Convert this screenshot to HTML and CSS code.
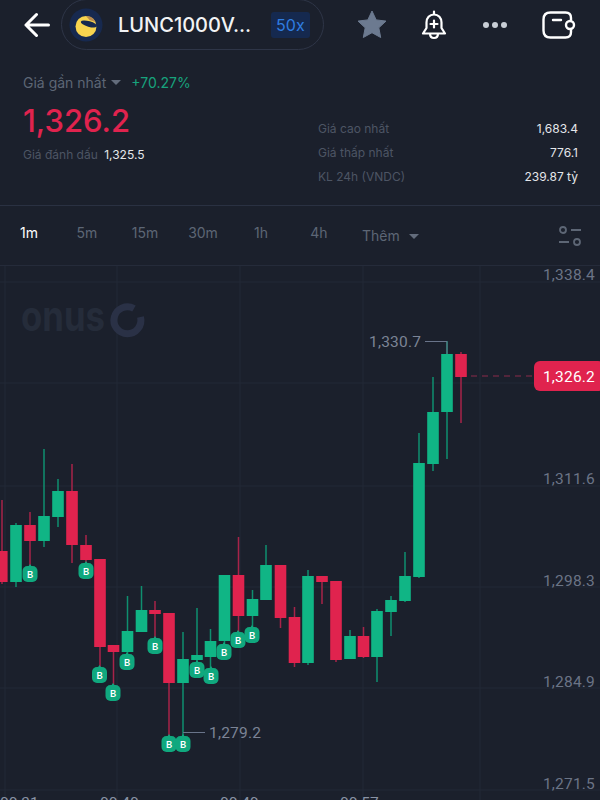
FILE: index.html
```html
<!DOCTYPE html>
<html lang="vi">
<head>
    <meta charset="utf-8" />
    <title>LUNC1000VNDC</title>
    <link rel="stylesheet" href="styles.css">
</head>
<body>
    <div class="page">
        <div class="topbar">
            <svg class="back" width="26" height="26" viewBox="0 0 26 26"><path d="M24.5 13H2M12.5 2.5 2 13l10.500 10.500" /></svg>
            <div class="pair">
                <svg class="coin" width="34" height="34" viewBox="0 0 34 34">
                    <circle cx="17" cy="17" r="16.500" fill="#17294f" />
                    <circle cx="17" cy="18.500" r="10.500" fill="#f8d44f" />
                    <path d="M17 8c4 0 8 2 9.500 6l-6-2z" fill="#b98a4e" />
                    <ellipse cx="20" cy="16" rx="8.500" ry="2.800" transform="rotate(16 20 16)" fill="#17294f" />
                </svg>
                <span class="pair_name">LUNC1000V...</span>
                <span class="leverage">50x</span>
            </div>
            <div class="actions">
                <svg class="star" width="30" height="30" viewBox="0 0 30 30"><path d="M15 1l4.200 8.900 9.800 1.200-7.200 6.700 1.900 9.700-8.700-4.800-8.700 4.800 1.900-9.700L1 11.100l9.800-1.200z" stroke="#6c7a90" stroke-width="1" stroke-linejoin="round" /></svg>
                <svg class="bell" width="28" height="30" viewBox="0 0 28 30">
                    <path d="M14 1.500v3M14 4.500c-4.500 0-7.500 3.500-7.500 8v5.500L3 23.500h22L21.500 18v-5.500c0-4.500-3-8-7.500-8zM10 23.500c0 3 1.800 4.500 4 4.500s4-1.500 4-4.500M14 10.500v7M10.500 14h7" />
                </svg>
                <svg class="dots" width="28" height="30" viewBox="0 0 28 30"><circle cx="5" cy="15" r="3" /><circle cx="14" cy="15" r="3" /><circle cx="23" cy="15" r="3" /></svg>
                <svg class="wallet" width="34" height="30" viewBox="0 0 34 30">
                    <path d="M29 10V8c0-3.500-2-5.500-5.500-5.500h-15C4 2.500 1.500 5 1.500 9.500v11c0 4.500 2.500 7 7 7h15c3.500 0 5.500-2 5.500-5.500v-2M11 10h8" />
                    <rect x="24" y="11" width="8" height="8" rx="4" />
                </svg>
            </div>
        </div>

        <div class="summary">
            <div class="summary_left">
                <div class="last_row">
                    <span class="muted_label">Giá gần nhất</span>
                    <span class="caret"></span>
                    <span class="change">+70.27%</span>
                </div>
                <div class="price">1,326.2</div>
                <div class="mark_row">
                    <span class="dim_label">Giá đánh dấu</span>
                    <span class="value">1,325.5</span>
                </div>
            </div>
            <div class="stats">
                <div class="stat_row"><span class="dim_label">Giá cao nhất</span><span class="value">1,683.4</span></div>
                <div class="stat_row"><span class="dim_label">Giá thấp nhất</span><span class="value">776.1</span></div>
                <div class="stat_row"><span class="dim_label">KL 24h (VNDC)</span><span class="value">239.87 tỷ</span></div>
            </div>
        </div>

        <div class="tabs">
            <span class="tab tab_active">1m</span>
            <span class="tab">5m</span>
            <span class="tab">15m</span>
            <span class="tab">30m</span>
            <span class="tab">1h</span>
            <span class="tab">4h</span>
            <span class="tab_more">Thêm <span class="caret"></span></span>
            <svg class="tune" width="24" height="24" viewBox="0 0 24 24">
                <circle cx="5" cy="6" r="3" /><path d="M13 6h10M1 18h10" /><circle cx="19" cy="18" r="3" />
            </svg>
        </div>

        <svg class="chart" width="600" height="534" viewBox="0 266 600 534">
            <!-- grid -->
            <g class="grid">
                <path d="M0 282H600M0 383H600M0 486H600M0 587H600M0 688H600M0 790H600" />
                <path d="M5 266V800M117 266V800M240 266V800M363 266V800M480 266V800" />
            </g>

            <!-- watermark -->
            <text class="mark_text" x="21" y="331" textLength="84" lengthAdjust="spacingAndGlyphs">onus</text>
            <path class="mark_ring" d="M134 308.500A13.500 13.500 0 1 0 140.500 317" />

            <!-- candles -->
            <g class="down"><line x1="2" x2="2" y1="500" y2="584" /><rect x="-4" y="551" width="11.600" height="31" /></g>
            <g class="up"><line x1="16" x2="16" y1="523" y2="587" /><rect x="10.200" y="525" width="11.600" height="57" /></g>
            <g class="down"><line x1="30" x2="30" y1="512" y2="566" /><rect x="24.200" y="525" width="11.600" height="16" /></g>
            <g class="up"><line x1="44" x2="44" y1="449" y2="547" /><rect x="38.200" y="516" width="11.600" height="25" /></g>
            <g class="up"><line x1="58" x2="58" y1="479" y2="527" /><rect x="52.200" y="491" width="11.600" height="26" /></g>
            <g class="down"><line x1="72" x2="72" y1="464" y2="563" /><rect x="66.200" y="491" width="11.600" height="54" /></g>
            <g class="down"><line x1="86" x2="86" y1="535" y2="564" /><rect x="80.200" y="545" width="11.600" height="15" /></g>
            <g class="down"><line x1="100" x2="100" y1="559" y2="668" /><rect x="94.200" y="559" width="11.600" height="88" /></g>
            <g class="down"><line x1="113.500" x2="113.500" y1="645" y2="686" /><rect x="107.700" y="645" width="11.600" height="7" /></g>
            <g class="up"><line x1="127.500" x2="127.500" y1="596" y2="655" /><rect x="121.700" y="631" width="11.600" height="21" /></g>
            <g class="up"><line x1="141.500" x2="141.500" y1="586" y2="632" /><rect x="135.700" y="610" width="11.600" height="22" /></g>
            <g class="down"><line x1="155" x2="155" y1="601" y2="639" /><rect x="149.200" y="610" width="11.600" height="4" /></g>
            <g class="down"><line x1="169" x2="169" y1="613" y2="737" /><rect x="163.200" y="613" width="11.600" height="70" /></g>
            <g class="up"><line x1="183" x2="183" y1="632" y2="737" /><rect x="177.200" y="659" width="11.600" height="24" /></g>
            <g class="up"><line x1="197" x2="197" y1="608" y2="663" /><rect x="191.200" y="655" width="11.600" height="5" /></g>
            <g class="up"><line x1="210.500" x2="210.500" y1="629" y2="669" /><rect x="204.700" y="641" width="11.600" height="16" /></g>
            <g class="up"><line x1="224.500" x2="224.500" y1="575" y2="645" /><rect x="218.700" y="575" width="11.600" height="66" /></g>
            <g class="down"><line x1="238.500" x2="238.500" y1="537" y2="633" /><rect x="232.700" y="575" width="11.600" height="41" /></g>
            <g class="up"><line x1="252.500" x2="252.500" y1="590" y2="628" /><rect x="246.700" y="599" width="11.600" height="17" /></g>
            <g class="up"><line x1="266" x2="266" y1="545" y2="600" /><rect x="260.200" y="565" width="11.600" height="35" /></g>
            <g class="down"><line x1="280.500" x2="280.500" y1="565" y2="628" /><rect x="274.700" y="565" width="11.600" height="53" /></g>
            <g class="down"><line x1="294.500" x2="294.500" y1="607" y2="667" /><rect x="288.700" y="617" width="11.600" height="46" /></g>
            <g class="up"><line x1="308" x2="308" y1="570" y2="665" /><rect x="302.200" y="576" width="11.600" height="87" /></g>
            <g class="down"><line x1="322" x2="322" y1="576" y2="604" /><rect x="316.200" y="576" width="11.600" height="6" /></g>
            <g class="down"><line x1="336" x2="336" y1="581" y2="662" /><rect x="330.200" y="581" width="11.600" height="79" /></g>
            <g class="up"><line x1="350" x2="350" y1="630" y2="659" /><rect x="344.200" y="636" width="11.600" height="23" /></g>
            <g class="down"><line x1="363.500" x2="363.500" y1="627" y2="658" /><rect x="357.700" y="636" width="11.600" height="21" /></g>
            <g class="up"><line x1="377" x2="377" y1="609" y2="682" /><rect x="371.200" y="611" width="11.600" height="46" /></g>
            <g class="up"><line x1="391" x2="391" y1="596" y2="636" /><rect x="385.200" y="600" width="11.600" height="12" /></g>
            <g class="up"><line x1="405" x2="405" y1="552" y2="602" /><rect x="399.200" y="576" width="11.600" height="25" /></g>
            <g class="up"><line x1="419" x2="419" y1="433" y2="578" /><rect x="413.200" y="463" width="11.600" height="114" /></g>
            <g class="up"><line x1="433" x2="433" y1="377" y2="471" /><rect x="427.200" y="412" width="11.600" height="52" /></g>
            <g class="up"><line x1="447" x2="447" y1="341" y2="459" /><rect x="441.200" y="354" width="11.600" height="58" /></g>
            <g class="down"><line x1="461" x2="461" y1="352" y2="423" /><rect x="455.200" y="354" width="11.600" height="23" /></g>

            <!-- buy markers -->
            <g class="badge" transform="translate(30 574)"><path d="M-2-7 0-10 2-7z" /><rect x="-7.500" y="-8" width="15" height="16" rx="5" /><text y="3.500">B</text></g>
            <g class="badge" transform="translate(86 571)"><path d="M-2-7 0-10 2-7z" /><rect x="-7.500" y="-8" width="15" height="16" rx="5" /><text y="3.500">B</text></g>
            <g class="badge" transform="translate(99.500 675)"><path d="M-2-7 0-10 2-7z" /><rect x="-7.500" y="-8" width="15" height="16" rx="5" /><text y="3.500">B</text></g>
            <g class="badge" transform="translate(113 693)"><path d="M-2-7 0-10 2-7z" /><rect x="-7.500" y="-8" width="15" height="16" rx="5" /><text y="3.500">B</text></g>
            <g class="badge" transform="translate(127 662)"><path d="M-2-7 0-10 2-7z" /><rect x="-7.500" y="-8" width="15" height="16" rx="5" /><text y="3.500">B</text></g>
            <g class="badge" transform="translate(155 646)"><path d="M-2-7 0-10 2-7z" /><rect x="-7.500" y="-8" width="15" height="16" rx="5" /><text y="3.500">B</text></g>
            <g class="badge" transform="translate(169 744)"><path d="M-2-7 0-10 2-7z" /><rect x="-7.500" y="-8" width="15" height="16" rx="5" /><text y="3.500">B</text></g>
            <g class="badge" transform="translate(183 744)"><path d="M-2-7 0-10 2-7z" /><rect x="-7.500" y="-8" width="15" height="16" rx="5" /><text y="3.500">B</text></g>
            <g class="badge" transform="translate(197 670)"><path d="M-2-7 0-10 2-7z" /><rect x="-7.500" y="-8" width="15" height="16" rx="5" /><text y="3.500">B</text></g>
            <g class="badge" transform="translate(211 676)"><path d="M-2-7 0-10 2-7z" /><rect x="-7.500" y="-8" width="15" height="16" rx="5" /><text y="3.500">B</text></g>
            <g class="badge" transform="translate(224 652)"><path d="M-2-7 0-10 2-7z" /><rect x="-7.500" y="-8" width="15" height="16" rx="5" /><text y="3.500">B</text></g>
            <g class="badge" transform="translate(238 640)"><path d="M-2-7 0-10 2-7z" /><rect x="-7.500" y="-8" width="15" height="16" rx="5" /><text y="3.500">B</text></g>
            <g class="badge" transform="translate(252 635)"><path d="M-2-7 0-10 2-7z" /><rect x="-7.500" y="-8" width="15" height="16" rx="5" /><text y="3.500">B</text></g>

            <!-- high / low callouts -->
            <path class="leader" d="M425 341.500H447V354" />
            <text class="callout" x="369" y="347">1,330.7</text>
            <path class="leader" d="M183 732.500H205" />
            <text class="callout" x="209" y="738">1,279.2</text>

            <!-- price axis -->
            <text class="axis" x="595" y="280">1,338.4</text>
            <text class="axis" x="595" y="484">1,311.6</text>
            <text class="axis" x="595" y="586">1,298.3</text>
            <text class="axis" x="595" y="687">1,284.9</text>
            <text class="axis" x="595" y="789">1,271.5</text>

            <!-- last price -->
            <line class="last_line" x1="471" x2="534" y1="376" y2="376" />
            <rect class="last_tag" x="534" y="361" width="70" height="30" rx="6" />
            <text class="last_text" x="595" y="382">1,326.2</text>

            <!-- time axis -->
            <text class="time" x="0" y="808">00:31</text>
            <text class="time" x="100" y="808">00:40</text>
            <text class="time" x="220" y="808">00:49</text>
            <text class="time" x="340" y="808">00:57</text>
        </svg>
    </div>
</body>
</html>
```

FILE: styles.css
```css
* {
    box-sizing: border-box;
}

body {
    margin: 0;
    background: #1b202c;
    font-family: "Inter", "Noto Sans", sans-serif;
}

.page {
    width: 600px;
    height: 800px;
    overflow: hidden;
    display: flex;
    flex-direction: column;
}

.topbar {
    display: flex;
    align-items: center;
    height: 50px;
    flex: none;
    padding-left: 24px;
}

.back {
    fill: none;
    stroke: #fff;
    stroke-width: 3;
    stroke-linecap: round;
    stroke-linejoin: round;
}

.pair {
    display: flex;
    align-items: center;
    width: 263px;
    height: 51px;
    margin-left: 11px;
    margin-top: -1px;
    padding-left: 7px;
    border: 1.5px solid #2e3547;
    border-radius: 26px;
}

.pair_name {
    margin-left: 15px;
    color: #f2f3f5;
    font-size: 20px;
    font-weight: 500;
    white-space: nowrap;
}

.leverage {
    margin-left: 20px;
    padding: 3px 5px;
    border-radius: 3px;
    background: #15294f;
    color: #2f7de1;
    font-size: 16px;
}

.actions {
    display: flex;
    align-items: center;
    margin-left: 33px;
}

.star {
    fill: #6c7a90;
}

.bell {
    margin-left: 33px;
    fill: none;
    stroke: #fff;
    stroke-width: 2.200;
    stroke-linecap: round;
    stroke-linejoin: round;
}

.dots {
    margin-left: 33px;
    fill: #c9ced6;
}

.wallet {
    margin-left: 33px;
    fill: none;
    stroke: #fff;
    stroke-width: 2.400;
    stroke-linecap: round;
}

.summary {
    display: flex;
    justify-content: space-between;
    align-items: flex-end;
    height: 156px;
    flex: none;
    padding: 23px 22px 17px 23px;
    border-bottom: 1px solid #2a3142;
}

.summary_left {
    align-self: flex-start;
}

.last_row {
    display: flex;
    align-items: center;
    height: 18px;
    font-size: 14px;
}

.muted_label {
    color: #5d6675;
}

.caret {
    display: inline-block;
    width: 0;
    height: 0;
    margin-left: 5px;
    border-left: 5px solid transparent;
    border-right: 5px solid transparent;
    border-top: 5px solid #636c7c;
    vertical-align: 2px;
}

.change {
    margin-left: 10px;
    color: #17a37d;
}

.price {
    margin-top: 9px;
    color: #e0234e;
    font-size: 31px;
    font-weight: 500;
    line-height: 42px;
}

.mark_row {
    margin-top: 5px;
    font-size: 12px;
}

.dim_label {
    color: #4d5564;
}

.value {
    color: #e4e6ea;
}

.mark_row .value {
    margin-left: 3px;
}

.stats {
    width: 260px;
    font-size: 12px;
}

.stat_row {
    display: flex;
    justify-content: space-between;
    align-items: center;
    height: 24px;
}

.tabs {
    display: flex;
    align-items: center;
    height: 60px;
    flex: none;
    padding-bottom: 6px;
    border-bottom: 1px solid #252b3a;
}

.tab {
    width: 58px;
    text-align: center;
    color: #5d6675;
    font-size: 14px;
}

.tab_active {
    color: #fff;
}

.tab_more {
    margin-left: 14px;
    padding-top: 5px;
    color: #5d6675;
    font-size: 14px;
}

.tune {
    margin-left: auto;
    margin-right: 18px;
    margin-top: 6px;
    fill: none;
    stroke: #5d6675;
    stroke-width: 1.800;
}

.chart {
    display: block;
    flex: none;
}

.grid path {
    fill: none;
    stroke: #222836;
    stroke-width: 1;
}

.mark_text {
    fill: #252c3a;
    font-size: 42px;
    font-weight: 700;
}

.mark_ring {
    fill: none;
    stroke: #2a3146;
    stroke-width: 7;
}

.up {
    fill: #10b585;
    stroke: #0f8f6f;
}

.down {
    fill: #e0234e;
    stroke: #a82349;
}

.up line, .down line {
    stroke-width: 1.500;
}

.up rect, .down rect {
    stroke: none;
}

.badge path, .badge rect {
    fill: #10a87e;
}

.badge text {
    fill: #fff;
    font-size: 9.500px;
    font-weight: 600;
    text-anchor: middle;
}

.leader {
    fill: none;
    stroke: #69748a;
    stroke-width: 1;
}

.callout {
    fill: #7b8496;
    font-family: "Roboto", sans-serif;
    font-size: 15.500px;
    letter-spacing: .2px;
}

.axis {
    fill: #6b7486;
    font-family: "Roboto", sans-serif;
    font-size: 15.500px;
    letter-spacing: .2px;
    text-anchor: end;
}

.last_line {
    stroke: #8c2b4b;
    stroke-width: 1;
    stroke-dasharray: 6 5;
}

.last_tag {
    fill: #e0234e;
}

.last_text {
    fill: #fff;
    font-family: "Roboto", sans-serif;
    font-size: 15.500px;
    letter-spacing: .2px;
    text-anchor: end;
}

.time {
    fill: #8a93a5;
    font-family: "Roboto", sans-serif;
    font-size: 15.500px;
}
```
